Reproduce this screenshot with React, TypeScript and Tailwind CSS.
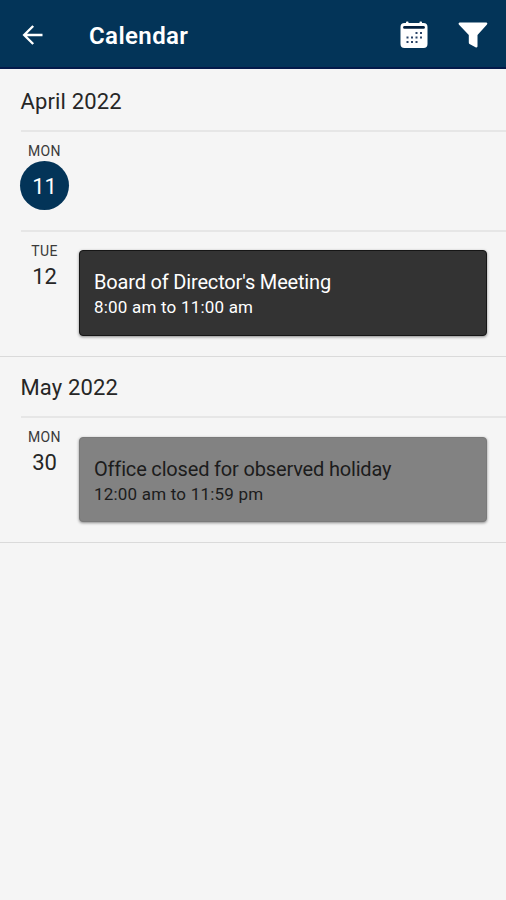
import React from 'react'
import clsx from 'clsx'

type CalendarEvent = {
    title: string
    time: string
    past?: boolean
}

type Day = {
    weekday: string
    date: number
    today?: boolean
    event?: CalendarEvent
}

type Month = {
    name: string
    days: Day[]
}

const months: Month[] = [
    {
        name: 'April 2022',
        days: [
            { weekday: 'MON', date: 11, today: true },
            {
                weekday: 'TUE',
                date: 12,
                event: { title: "Board of Director's Meeting", time: '8:00 am to 11:00 am' },
            },
        ],
    },
    {
        name: 'May 2022',
        days: [
            {
                weekday: 'MON',
                date: 30,
                event: { title: 'Office closed for observed holiday', time: '12:00 am to 11:59 pm', past: true },
            },
        ],
    },
]

const BackIcon = () => (
    <svg width="22" height="22" viewBox="0 0 22 22" fill="none" stroke="white" strokeWidth="2.4">
        <path d="M20.5 11H2.500M11.200 2L2.200 11l9 9" />
    </svg>
)

const CalendarIcon = () => (
    <svg width="28" height="28" viewBox="0 0 28 28">
        <path
            d="M4.500 2H6V1.200Q6 .5 6.800.5h1Q8.500.5 8.500 1.200V2h11V1.200q0-.7.7-.7h1q.8 0 .8.7V2h1.500q4 0 4 4v17q0 4-4 4h-19q-4 0-4-4V6q0-4 4-4z"
            fill="white"
        />
        <path d="M4.500 6.400h19" stroke="#03203f" strokeWidth="2.800" strokeLinecap="round" />
        <g fill="#2a4468">
            <path d="M15.500 11h2v2h-2zM20 11h2v2h-2z" />
            <path d="M6.500 15.500h2v2h-2zM11 15.500h2v2h-2zM15.500 15.500h2v2h-2zM20 15.500h2v2h-2z" />
            <path d="M6.500 20h2v2h-2zM11 20h2v2h-2zM15.500 20h2v2h-2z" />
        </g>
    </svg>
)

const FilterIcon = () => (
    <svg width="30" height="26" viewBox="0 0 30 26" fill="white">
        <path d="M1.500.5h27q1.500.5.5 2L19.500 13v11.500q-.5 1.500-2 .8l-6-3.300q-.7-.5-.7-1.500V13L.8 2.500Q0 1 1.500.5z" />
    </svg>
)

const Header = () => (
    <header className="flex h-[69px] items-center border-b-2 border-[#041a4a] bg-[#033458] pl-[22px] pr-[18px] pt-0.5">
        <button type="button" aria-label="Back">
            <BackIcon />
        </button>
        <h1 className="ml-[45px] flex-1 pt-0.5 text-[24px] font-semibold leading-8 tracking-[0.4px] text-white">
            Calendar
        </h1>
        <button type="button" aria-label="Month view" className="mr-[30px]">
            <CalendarIcon />
        </button>
        <button type="button" aria-label="Filter">
            <FilterIcon />
        </button>
    </header>
)

const EventCard = ({ event }: { event: CalendarEvent }) => (
    <div
        className={clsx(
            'ml-[11px] mr-[19px] mt-[18.8px] h-[85.5px] flex-1 rounded-[4px] border pl-[14px] pt-[18px] shadow-[0_1px_3px_rgba(0,0,0,0.45)]',
            event.past
                ? 'border-[#7a7a7a] bg-[#828282] text-[#1c1c1c]'
                : 'border-[#161616] bg-[#333333] text-white',
        )}
    >
        <p className="text-[20px] leading-[26px] tracking-[-0.17px]">{event.title}</p>
        <p className="text-[17px] leading-[24px] tracking-[0.2px]">{event.time}</p>
    </div>
)

const DayRow = ({ day }: { day: Day }) => (
    <div
        className={clsx(
            'ml-[21px] flex border-t-2 border-[#e6e6e6]',
            day.event ? 'h-[126.3px]' : 'h-[99.5px]',
        )}
    >
        <div className="flex w-[47px] flex-col items-center pt-2.5 text-[#262626]">
            <span className="text-[14px] leading-[18px] tracking-[0.4px] text-[#3a3a3a]">{day.weekday}</span>
            <span
                className={clsx(
                    'mt-px flex shrink-0 items-center justify-center text-[22px]',
                    day.today ? 'size-[49px] rounded-full bg-[#033458] pt-px text-white' : 'h-[32px]',
                )}
            >
                {day.date}
            </span>
        </div>
        {day.event && <EventCard event={day.event} />}
    </div>
)

const App = () => {
    return (
        <div className="min-h-screen bg-[#f5f5f5] font-[Roboto,sans-serif]">
            <Header />
            <main className="pt-0.5">
                {months.map((month) => (
                    <section key={month.name} className="border-b border-[#dadada]">
                        <h2 className="flex h-[59px] items-center pl-[20.5px] pt-0.5 text-[22px] tracking-[0.15px] text-[#262626]">
                            {month.name}
                        </h2>
                        {month.days.map((day) => (
                            <DayRow key={day.date} day={day} />
                        ))}
                    </section>
                ))}
            </main>
        </div>
    )
}

export default App
